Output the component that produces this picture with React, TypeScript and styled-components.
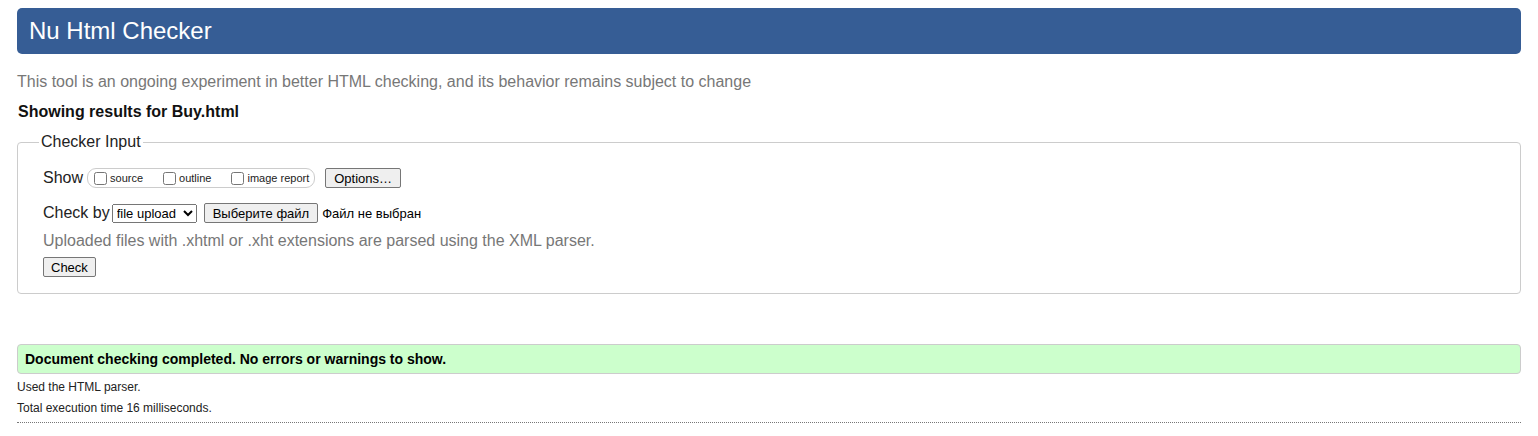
import React from "react";
import styled, { createGlobalStyle } from "styled-components";

const Global = createGlobalStyle`
  html, body { margin: 0; padding: 0; background: #fff; }
  body { font-family: "Liberation Sans", Arial, sans-serif; color: #000; }
`;

const Page = styled.div`
  padding: 8px 17px 0 17px;
`;

const Header = styled.h1`
  margin: 0;
  height: 46px;
  display: flex;
  align-items: center;
  padding: 0 12px;
  background: #365d95;
  color: #fff;
  font-size: 24px;
  font-weight: normal;
  border-radius: 5px;
`;

const Intro = styled.p`
  margin: 18px 0 0 0;
  font-size: 16px;
  line-height: 20px;
  color: #777;
`;

const ResultsFor = styled.p`
  margin: 10px 0 0 1px;
  font-size: 16px;
  line-height: 20px;
  font-weight: bold;
  color: #111;
`;

const Fieldset = styled.fieldset`
  margin: 11px 0 0 0;
  padding: 17px 25px 16px 25px;
  border: 1px solid #ccc;
  border-radius: 4px;
`;

const Legend = styled.legend`
  padding: 0 2px;
  margin-left: -4px;
  font-size: 16px;
  color: #222;
`;

const Row = styled.div<{ $mt?: number }>`
  display: flex;
  align-items: center;
  margin-top: ${(p) => p.$mt ?? 0}px;
  font-size: 16px;
  color: #222;
`;

const Label = styled.span<{ $mr?: number }>`
  font-size: 16px;
  margin-right: ${(p) => p.$mr ?? 4}px;
`;

const Pill = styled.span`
  display: inline-flex;
  align-items: center;
  height: 18px;
  border: 1px solid #ccc;
  border-radius: 9px;
  padding: 0 5px 0 4px;
  gap: 18px;
`;

const Opt = styled.label`
  display: inline-flex;
  align-items: center;
  font-size: 11px;
  color: #222;
`;

const Box = styled.input`
  margin: 0 3px 0 2px;
  width: 13px;
  height: 13px;
`;

const Btn = styled.button<{ $ml?: number; $px?: number }>`
  font-family: "Liberation Sans", Arial, sans-serif;
  font-size: 13px;
  height: 20px;
  padding: 0 ${(p) => p.$px ?? 8}px;
  margin-left: ${(p) => p.$ml ?? 10}px;
  color: #000;
  background: #efefef;
  border: 1px solid #767676;
  border-radius: 2px;
`;

const Select = styled.select`
  font-family: "Liberation Sans", Arial, sans-serif;
  font-size: 13px;
  height: 19px;
  width: 85px;
`;

const FileName = styled.span`
  font-size: 13px;
  margin-left: 4px;
  color: #000;
`;

const Hint = styled.p`
  margin: 8px 0 0 0;
  font-size: 16px;
  line-height: 20px;
  color: #777;
`;

const Success = styled.div`
  margin-top: 50px;
  height: 28px;
  display: flex;
  align-items: center;
  padding: 0 7px;
  background: #ccffcc;
  border: 1px solid #ccc;
  border-radius: 4px;
  font-size: 14px;
  font-weight: bold;
  color: #000;
`;

const Small = styled.p<{ $mt: number }>`
  margin: ${(p) => p.$mt}px 0 0 0;
  font-size: 12px;
  line-height: 14px;
  color: #222;
`;

const Divider = styled.hr`
  margin: 7px 0 0 0;
  border: 0;
  border-top: 1px dotted #777;
`;

export default function App() {
  return (
    <Page>
      <Global />
      <Header>Nu Html Checker</Header>
      <Intro>
        This tool is an ongoing experiment in better HTML checking, and its
        behavior remains subject to change
      </Intro>
      <ResultsFor>Showing results for Buy.html</ResultsFor>
      <Fieldset>
        <Legend>Checker Input</Legend>
        <Row>
          <Label>Show</Label>
          <Pill>
            <Opt>
              <Box type="checkbox" />
              source
            </Opt>
            <Opt>
              <Box type="checkbox" />
              outline
            </Opt>
            <Opt>
              <Box type="checkbox" />
              image report
            </Opt>
          </Pill>
          <Btn type="button">Options…</Btn>
        </Row>
        <Row $mt={15}>
          <Label $mr={2}>Check by</Label>
          <Select defaultValue="file">
            <option value="file">file upload</option>
          </Select>
          <Btn type="button" $ml={7}>Выберите файл</Btn>
          <FileName>Файл не выбран</FileName>
        </Row>
        <Hint>Uploaded files with .xhtml or .xht extensions are parsed using the XML parser.</Hint>
        <Row $mt={6}>
          <Btn type="button" $ml={0} $px={7}>Check</Btn>
        </Row>
      </Fieldset>
      <Success>Document checking completed. No errors or warnings to show.</Success>
      <Small $mt={6}>Used the HTML parser.</Small>
      <Small $mt={7}>Total execution time 16 milliseconds.</Small>
      <Divider />
    </Page>
  );
}
